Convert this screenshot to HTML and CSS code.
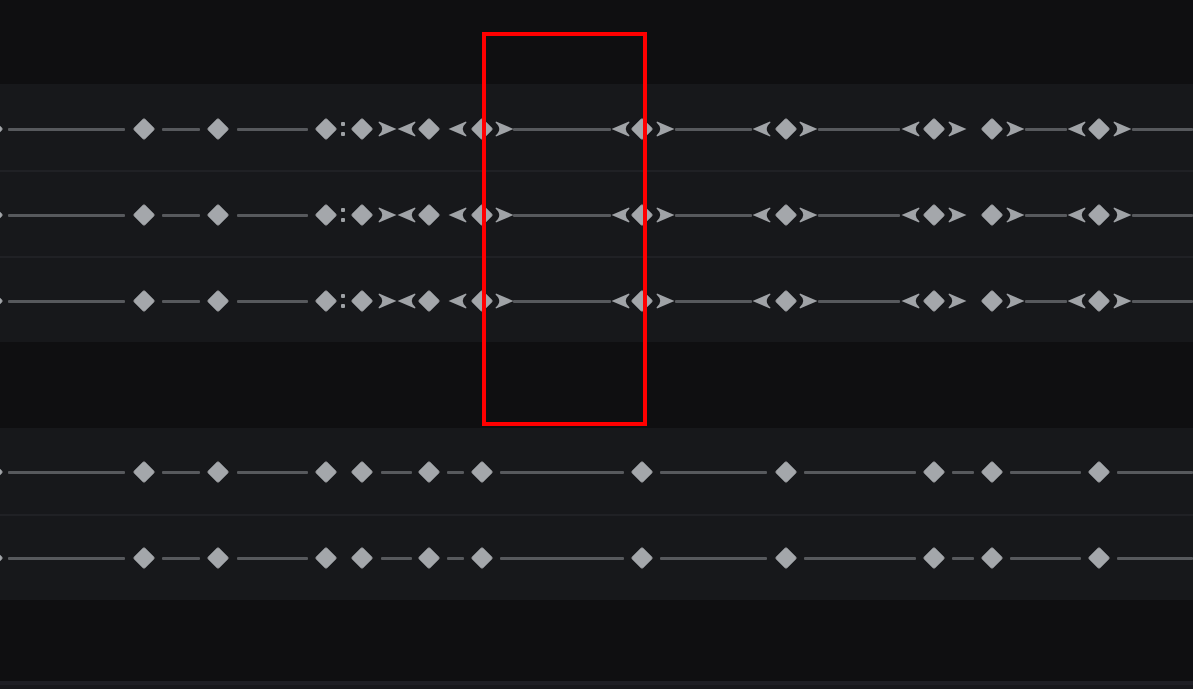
FILE: index.html
```html
<!DOCTYPE html>
<html lang="en">
<head>
<meta charset="utf-8">
<title>Keyframe timeline</title>
<link rel="stylesheet" href="styles.css">
</head>
<body>
<div class="timeline">
  <div class="top-space"></div>
  <div class="group" data-kind="eased">
    <div class="row"><div class="track"></div></div>
    <div class="row"><div class="track"></div></div>
    <div class="row"><div class="track"></div></div>
  </div>
  <div class="group-gap"></div>
  <div class="group" data-kind="linear">
    <div class="row"><div class="track"></div></div>
    <div class="row"><div class="track"></div></div>
  </div>
  <div class="bottom-space"></div>
  <div class="scrollbar"><div class="scroll-edge"></div></div>
</div>
<div class="selection"></div>
<script src="script.js"></script>
</body>
</html>
```

FILE: styles.css
```css
html, body {
  margin: 0;
  padding: 0;
  background: #0f0f11;
  overflow: hidden;
  font-family: "Liberation Sans", Arial, sans-serif;
}

.timeline {
  width: 1193px;
  height: 689px;
  display: flex;
  flex-direction: column;
}

.top-space { height: 84px; flex: none; }
.group-gap { height: 86px; flex: none; }
.bottom-space { flex: 1; }

.group {
  display: flex;
  flex-direction: column;
  background: #17181b;
  flex: none;
}

.row {
  height: 86px;
  box-sizing: border-box;
  position: relative;
  padding-top: 33px;
}
.row + .row { border-top: 2px solid #202125; padding-top: 31px; }

.group[data-kind="linear"] .row { padding-top: 32px; }
.group[data-kind="linear"] .row + .row { padding-top: 30px; }

.track {
  position: relative;
  height: 24px;
}

.seg {
  position: absolute;
  top: 10.5px;
  height: 3px;
  background: #57595d;
  border-radius: 1px;
}

.kf {
  position: absolute;
  top: 3.5px;
  width: 16px;
  height: 16px;
  margin-left: -8px;
  background: #a4a7ab;
  border-radius: 2px;
  transform: rotate(45deg);
  filter: blur(0.4px);
}

.chev {
  position: absolute;
  top: 3px;
  width: 19px;
  height: 18px;
  margin-left: -9.5px;
  fill: #a0a3a7;
  filter: blur(0.4px);
}

.dot {
  position: absolute;
  width: 4px;
  height: 4px;
  margin-left: -2px;
  background: #9ea1a5;
  border-radius: 1px;
}
.dot.up { top: 5px; }
.dot.down { top: 15px; }

.scrollbar {
  height: 8px;
  background: #18181c;
  flex: none;
}
.scroll-edge {
  height: 4px;
  background: #1f1f25;
}

.selection {
  position: absolute;
  left: 482px;
  top: 32px;
  width: 165px;
  height: 394px;
  box-sizing: border-box;
  border: 4px solid #ff0000;
  pointer-events: none;
}
```

FILE: script.js
```js
(function () {
  var keys = [-8, 144, 218, 326, 362, 429, 482, 642, 786, 934, 992, 1099];

  var data = {
    eased: {
      segs: [[8, 125], [162, 200], [237, 308], [513, 611], [675, 752], [818, 900], [1025, 1067], [1132, 1193]],
      right: [387, 504, 665, 808, 957, 1015, 1122],
      left: [406, 457, 620, 761, 910, 1076],
      dots: [343]
    },
    linear: {
      segs: [[8, 125], [162, 200], [237, 308], [381, 412], [447, 464], [500, 624], [660, 767], [804, 916], [952, 974], [1010, 1081], [1117, 1193]],
      right: [], left: [], dots: []
    }
  };

  var NS = "http://www.w3.org/2000/svg";

  function chevron(x, dir) {
    var svg = document.createElementNS(NS, "svg");
    svg.setAttribute("class", "chev");
    svg.setAttribute("viewBox", "0 0 19 18");
    svg.style.left = x + "px";
    var p = document.createElementNS(NS, "path");
    if (dir === "left") {
      p.setAttribute("d", "M0.5 9 L18 1.5 L18.5 2.5 Q11 9 18.5 15.5 L18 16.5 Z");
    } else {
      p.setAttribute("d", "M18.5 9 L1 1.5 L0.5 2.5 Q8 9 0.5 15.5 L1 16.5 Z");
    }
    svg.appendChild(p);
    return svg;
  }

  document.querySelectorAll(".group").forEach(function (g) {
    var d = data[g.getAttribute("data-kind")];
    g.querySelectorAll(".track").forEach(function (t) {
      d.segs.forEach(function (s) {
        var e = document.createElement("div");
        e.className = "seg";
        e.style.left = s[0] + "px";
        e.style.width = (s[1] - s[0]) + "px";
        t.appendChild(e);
      });
      d.dots.forEach(function (x) {
        ["up", "down"].forEach(function (c) {
          var e = document.createElement("div");
          e.className = "dot " + c;
          e.style.left = x + "px";
          t.appendChild(e);
        });
      });
      d.left.forEach(function (x) { t.appendChild(chevron(x, "left")); });
      d.right.forEach(function (x) { t.appendChild(chevron(x, "right")); });
      keys.forEach(function (x) {
        var e = document.createElement("div");
        e.className = "kf";
        e.style.left = x + "px";
        t.appendChild(e);
      });
    });
  });
})();
```
